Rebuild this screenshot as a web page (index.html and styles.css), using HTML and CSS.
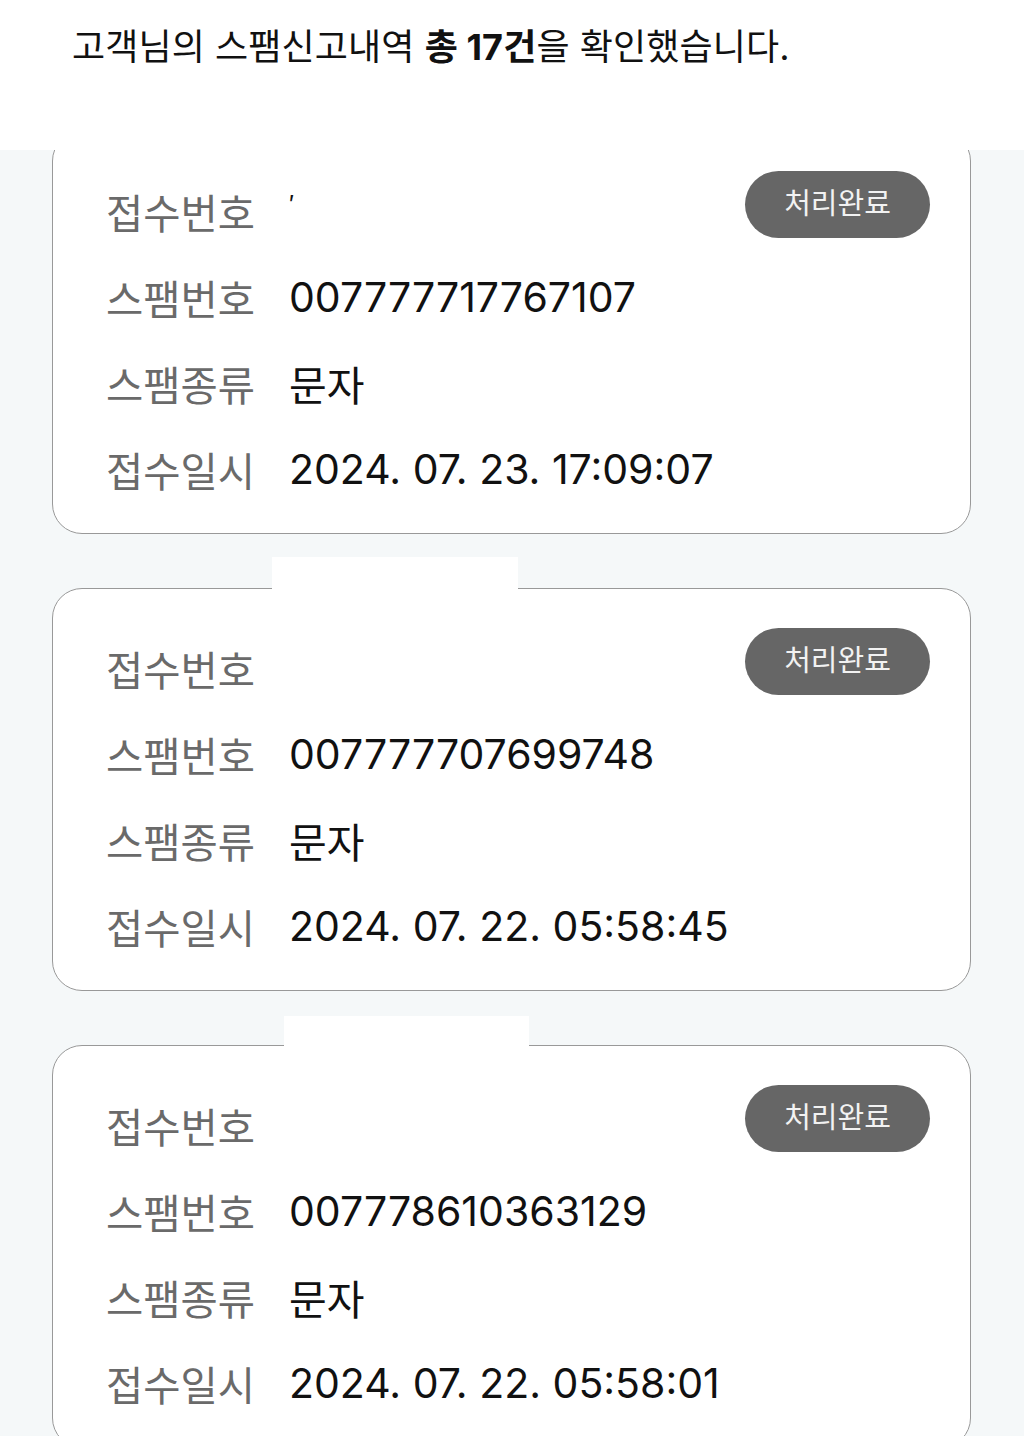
FILE: index.html
```html
<!DOCTYPE html>
<html lang="ko">

<head>
    <meta charset="UTF-8">
    <meta name="viewport" content="width=device-width, initial-scale=1.0">
    <title>스팸신고내역</title>
    <link rel="stylesheet" href="styles.css">
</head>

<body>
    <header class="summary">
        <p>고객님의 스팸신고내역 <strong>총 17건</strong>을 확인했습니다.</p>
    </header>

    <main class="report-list">
        <div class="report-card">
            <div class="report-row">
                <span class="label">접수번호</span>
                <span class="value mark">′</span>
                <span class="status">처리완료</span>
            </div>
            <div class="report-row">
                <span class="label">스팸번호</span>
                <span class="value">007777717767107</span>
            </div>
            <div class="report-row">
                <span class="label">스팸종류</span>
                <span class="value">문자</span>
            </div>
            <div class="report-row">
                <span class="label">접수일시</span>
                <span class="value">2024. 07. 23. 17:09:07</span>
            </div>
        </div>

        <div class="report-card">
            <!-- hidden part of the capture -->
            <div class="mask mask-a"></div>
            <div class="report-row">
                <span class="label">접수번호</span>
                <span class="value"></span>
                <span class="status">처리완료</span>
            </div>
            <div class="report-row">
                <span class="label">스팸번호</span>
                <span class="value">007777707699748</span>
            </div>
            <div class="report-row">
                <span class="label">스팸종류</span>
                <span class="value">문자</span>
            </div>
            <div class="report-row">
                <span class="label">접수일시</span>
                <span class="value">2024. 07. 22. 05:58:45</span>
            </div>
        </div>

        <div class="report-card">
            <div class="mask mask-b"></div>
            <div class="report-row">
                <span class="label">접수번호</span>
                <span class="value"></span>
                <span class="status">처리완료</span>
            </div>
            <div class="report-row">
                <span class="label">스팸번호</span>
                <span class="value">007778610363129</span>
            </div>
            <div class="report-row">
                <span class="label">스팸종류</span>
                <span class="value">문자</span>
            </div>
            <div class="report-row">
                <span class="label">접수일시</span>
                <span class="value">2024. 07. 22. 05:58:01</span>
            </div>
        </div>
    </main>
</body>

</html>
```

FILE: styles.css
```css
body {
    font-family: Inter, 'Noto Sans CJK KR', sans-serif;
    background-color: #f5f8f9;
    margin: 0;
    padding: 0;
}

.summary {
    position: relative;
    z-index: 2;
    background-color: #fff;
    height: 150px;
    box-sizing: border-box;
    padding: 26px 0 0 72px;
}

.summary p {
    margin: 0;
    font-size: 36px;
    line-height: 42px;
    color: #111;
    letter-spacing: 0.1px;
}

.summary strong {
    font-weight: 700;
}

.report-list {
    display: flex;
    flex-direction: column;
    gap: 54px;
    margin-top: -19px;
    padding: 0 53px 60px 52px;
}

.report-card {
    position: relative;
    background-color: #fff;
    border: 1px solid #999;
    border-radius: 30px;
    padding: 36px 40px 21px 53px;
}

.report-row {
    display: flex;
    align-items: center;
    height: 86px;
}

.label {
    width: 183px;
    flex-shrink: 0;
    font-size: 40.5px;
    color: #6a6a6a;
}

.value {
    font-size: 41px;
    color: #111;
}

.mark {
    font-size: 24px;
    align-self: flex-start;
    margin-top: 22px;
}

.status {
    margin-left: auto;
    align-self: flex-start;
    margin-top: 3px;
    width: 185px;
    height: 67px;
    border-radius: 34px;
    background-color: #666;
    color: #f2f2f2;
    font-size: 29px;
    line-height: 66px;
    text-align: center;
}

/* white blocks that hide part of the capture */
.mask {
    position: absolute;
    background-color: #fff;
}

.mask-a {
    top: -32px;
    left: 219px;
    width: 246px;
    height: 32px;
}

.mask-b {
    top: -30px;
    left: 231px;
    width: 245px;
    height: 30px;
}
```
